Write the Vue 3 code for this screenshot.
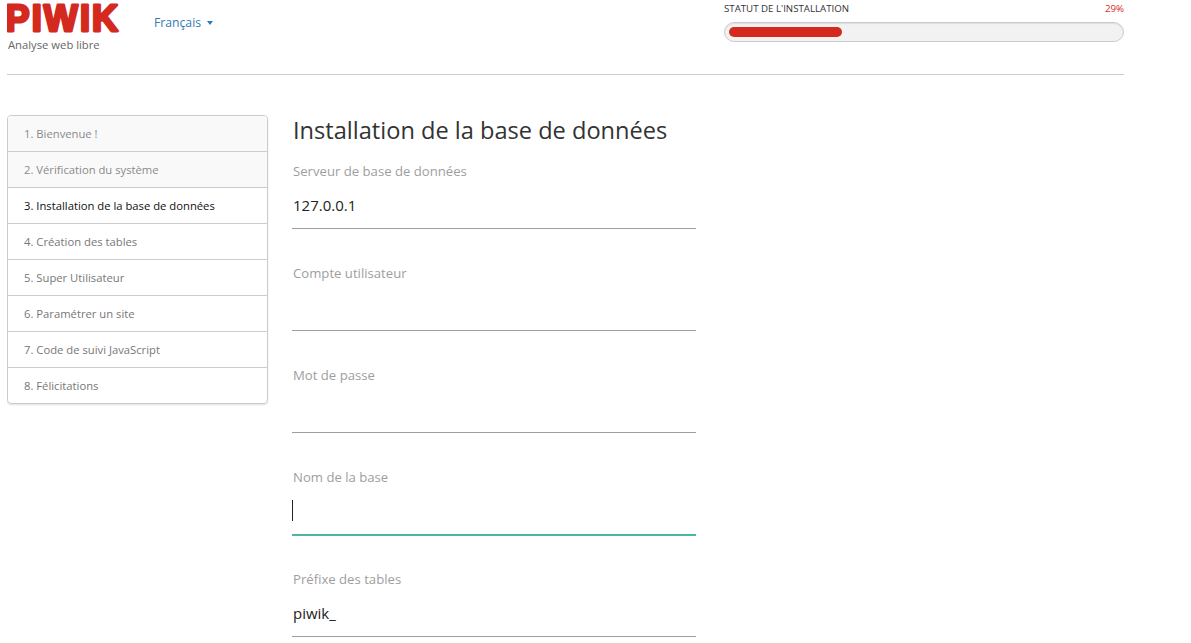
<script setup>
const steps = [
  { label: '1. Bienvenue !', state: 'done' },
  { label: '2. Vérification du système', state: 'done' },
  { label: '3. Installation de la base de données', state: 'current' },
  { label: '4. Création des tables', state: '' },
  { label: '5. Super Utilisateur', state: '' },
  { label: '6. Paramétrer un site', state: '' },
  { label: '7. Code de suivi JavaScript', state: '' },
  { label: '8. Félicitations', state: '' },
]
const fields = [
  { label: 'Serveur de base de données', value: '127.0.0.1' },
  { label: 'Compte utilisateur', value: '' },
  { label: 'Mot de passe', value: '' },
  { label: 'Nom de la base', value: '', focus: true },
  { label: 'Préfixe des tables', value: 'piwik_' },
]
</script>

<template>
  <div class="page">
    <header class="header">
      <div class="brand">
        <svg class="logo" width="120" height="36" viewBox="0 0 120 36">
          <text x="0.6" y="30.6" class="logo-text">PIWIK</text>
        </svg>
        <div class="tagline">Analyse web libre</div>
      </div>
      <a class="lang">Français <span class="caret"></span></a>
      <div class="status">
        <div class="status-top">
          <span>STATUT DE L'INSTALLATION</span>
          <span class="pct">29%</span>
        </div>
        <div class="track"><div class="bar" style="width: 29%"></div></div>
      </div>
    </header>
    <div class="main">
      <nav class="steps">
        <div v-for="s in steps" :key="s.label" class="step" :class="s.state">{{ s.label }}</div>
      </nav>
      <section class="content">
        <h2 class="title">Installation de la base de données</h2>
        <div v-for="f in fields" :key="f.label" class="field" :class="{ focus: f.focus }">
          <div class="label">{{ f.label }}</div>
          <div class="input"><span v-if="f.focus" class="cursor"></span>{{ f.value }}</div>
        </div>
      </section>
    </div>
  </div>
</template>

<style>
html, body { margin: 0; overflow: hidden; background: #fff; }
</style>

<style scoped>
.page {
  box-sizing: border-box;
  width: 1117px;
  margin-left: 7px;
  height: 643px;
  overflow: hidden;
  font-family: "Open Sans", "Noto Sans", sans-serif;
  color: #333;
}
.header {
  display: flex;
  height: 75px;
  box-sizing: border-box;
  border-bottom: 1px solid #ccc;
}
.brand { width: 147px; }
.logo {
  display: block;
  height: 36px;
  margin: 0 0 1px -2px;
}
.logo-text {
  font-family: "Liberation Sans", sans-serif;
  font-weight: 700;
  font-size: 36px;
  letter-spacing: 2.1px;
  fill: #d4291f;
  stroke: #d4291f;
  stroke-width: 2.8px;
  stroke-linejoin: round;
}
.tagline {
  padding-left: 1px;
  font-size: 11.25px;
  line-height: 16px;
  color: #666;
}
.lang {
  font-size: 12.2px;
  line-height: 16px;
  margin-top: 15px;
  color: #337ab7;
  height: 16px;
}
.caret {
  display: inline-block;
  width: 0;
  height: 0;
  margin-left: 3px;
  vertical-align: 2px;
  border-top: 4px solid #337ab7;
  border-left: 3px solid transparent;
  border-right: 3px solid transparent;
}
.status {
  margin-left: auto;
  width: 400px;
  padding-top: 2px;
}
.status-top {
  display: flex;
  justify-content: space-between;
  font-size: 9.7px;
  line-height: 13px;
  height: 20px;
  color: #333;
}
.pct { color: #d4291f; }
.track {
  box-sizing: border-box;
  height: 20px;
  padding: 4px;
  border: 1px solid #ccc;
  border-radius: 10px;
  background: #f2f2f2;
  box-shadow: inset 0 1px 1px rgba(0, 0, 0, 0.08);
}
.bar {
  height: 10px;
  border-radius: 5px;
  background: #d4291f;
}
.main {
  display: flex;
  gap: 24px;
  margin-top: 40px;
}
.steps {
  box-sizing: border-box;
  width: 261px;
  height: 289px;
  border: 1px solid #ccc;
  border-radius: 4px;
  box-shadow: 0 1px 2px rgba(0, 0, 0, 0.12);
  overflow: hidden;
}
.step {
  box-sizing: border-box;
  height: 36px;
  padding: 0 16px;
  line-height: 35px;
  font-size: 11.25px;
  color: #777;
  border-bottom: 1px solid #ccc;
}
.step:last-child { border-bottom: 0; }
.step.done { background: #f9f9f9; color: #8a8a8a; }
.step.current { color: #111; }
.content { width: 404px; }
.title {
  margin: 0;
  height: 32px;
  padding-left: 1px;
  font-size: 23.6px;
  font-weight: 400;
  line-height: 30px;
  color: #333;
}
.field {
  box-sizing: border-box;
  height: 102px;
  padding-top: 15px;
}
.label {
  padding-left: 1px;
  font-size: 13.15px;
  line-height: 18px;
  color: #9e9e9e;
}
.input {
  box-sizing: border-box;
  display: flex;
  align-items: center;
  height: 49px;
  padding: 2px 0 0 1px;
  border-bottom: 1px solid #9e9e9e;
  font-size: 15px;
  color: #222;
}
.focus .input {
  height: 50px;
  padding: 0;
  border-bottom: 2px solid #4db6a0;
}
.cursor {
  display: inline-block;
  width: 1px;
  height: 21px;
  background: #222;
}
</style>
